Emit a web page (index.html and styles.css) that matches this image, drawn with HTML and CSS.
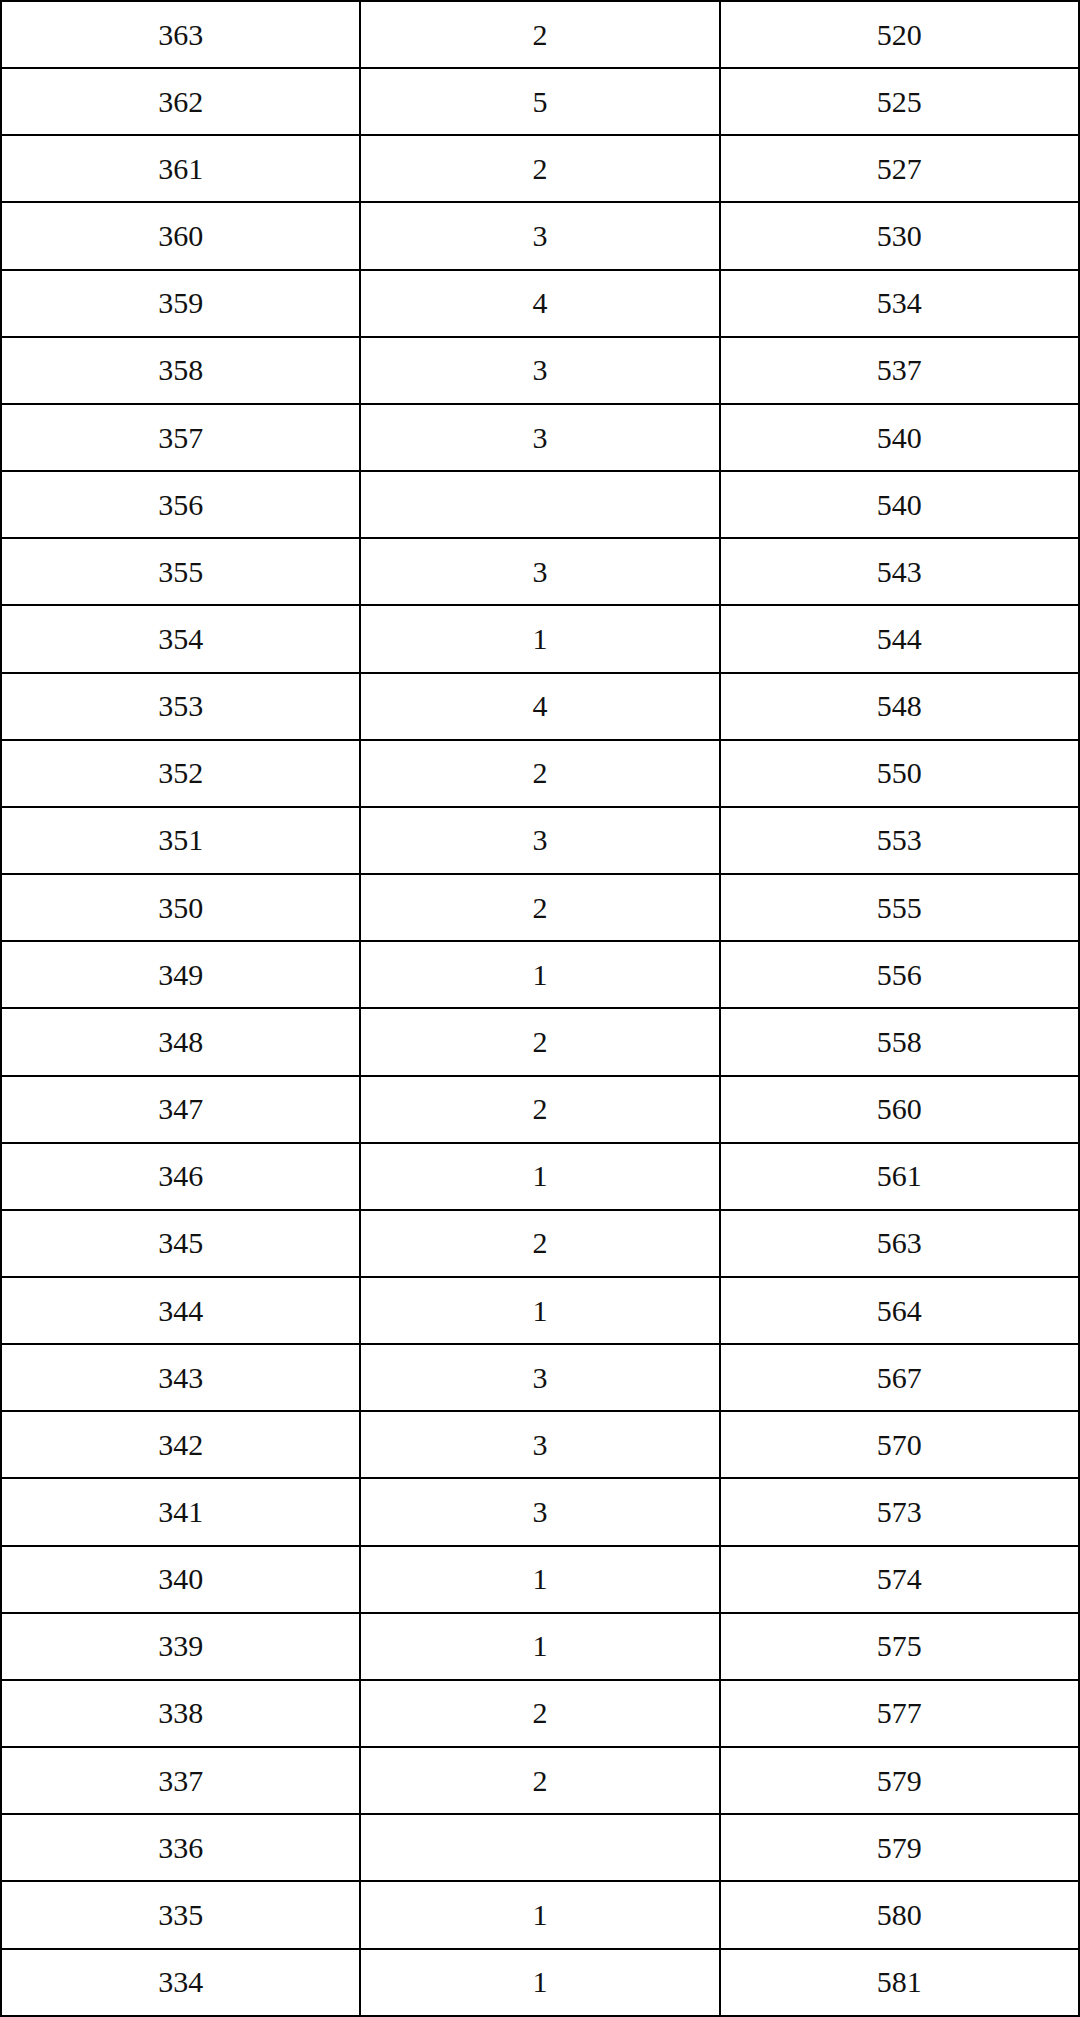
FILE: index.html
```html
<!DOCTYPE html>
<html>
<head>
<meta charset="utf-8">
<link rel="stylesheet" href="styles.css">
</head>
<body>
<table class="grid">
<tbody>
<tr><td>363</td><td>2</td><td>520</td></tr>
<tr><td>362</td><td>5</td><td>525</td></tr>
<tr><td>361</td><td>2</td><td>527</td></tr>
<tr><td>360</td><td>3</td><td>530</td></tr>
<tr><td>359</td><td>4</td><td>534</td></tr>
<tr><td>358</td><td>3</td><td>537</td></tr>
<tr><td>357</td><td>3</td><td>540</td></tr>
<tr><td>356</td><td></td><td>540</td></tr>
<tr><td>355</td><td>3</td><td>543</td></tr>
<tr><td>354</td><td>1</td><td>544</td></tr>
<tr><td>353</td><td>4</td><td>548</td></tr>
<tr><td>352</td><td>2</td><td>550</td></tr>
<tr><td>351</td><td>3</td><td>553</td></tr>
<tr><td>350</td><td>2</td><td>555</td></tr>
<tr><td>349</td><td>1</td><td>556</td></tr>
<tr><td>348</td><td>2</td><td>558</td></tr>
<tr><td>347</td><td>2</td><td>560</td></tr>
<tr><td>346</td><td>1</td><td>561</td></tr>
<tr><td>345</td><td>2</td><td>563</td></tr>
<tr><td>344</td><td>1</td><td>564</td></tr>
<tr><td>343</td><td>3</td><td>567</td></tr>
<tr><td>342</td><td>3</td><td>570</td></tr>
<tr><td>341</td><td>3</td><td>573</td></tr>
<tr><td>340</td><td>1</td><td>574</td></tr>
<tr><td>339</td><td>1</td><td>575</td></tr>
<tr><td>338</td><td>2</td><td>577</td></tr>
<tr><td>337</td><td>2</td><td>579</td></tr>
<tr><td>336</td><td></td><td>579</td></tr>
<tr><td>335</td><td>1</td><td>580</td></tr>
<tr><td>334</td><td>1</td><td>581</td></tr>
</tbody>
</table>
</body>
</html>
```
FILE: styles.css
```css
html, body {
  margin: 0;
  padding: 0;
  background: #fff;
}
.grid {
  width: 1080px;
  height: 2017px;
  border-collapse: collapse;
  table-layout: fixed;
  font-family: "Liberation Serif", "Noto Sans CJK SC", serif;
  font-size: 30px;
  color: #111;
}
.grid td {
  width: 33.33%;
  border: 2px solid #000;
  text-align: center;
  vertical-align: middle;
  padding: 0;
  height: 65px;
}
```
